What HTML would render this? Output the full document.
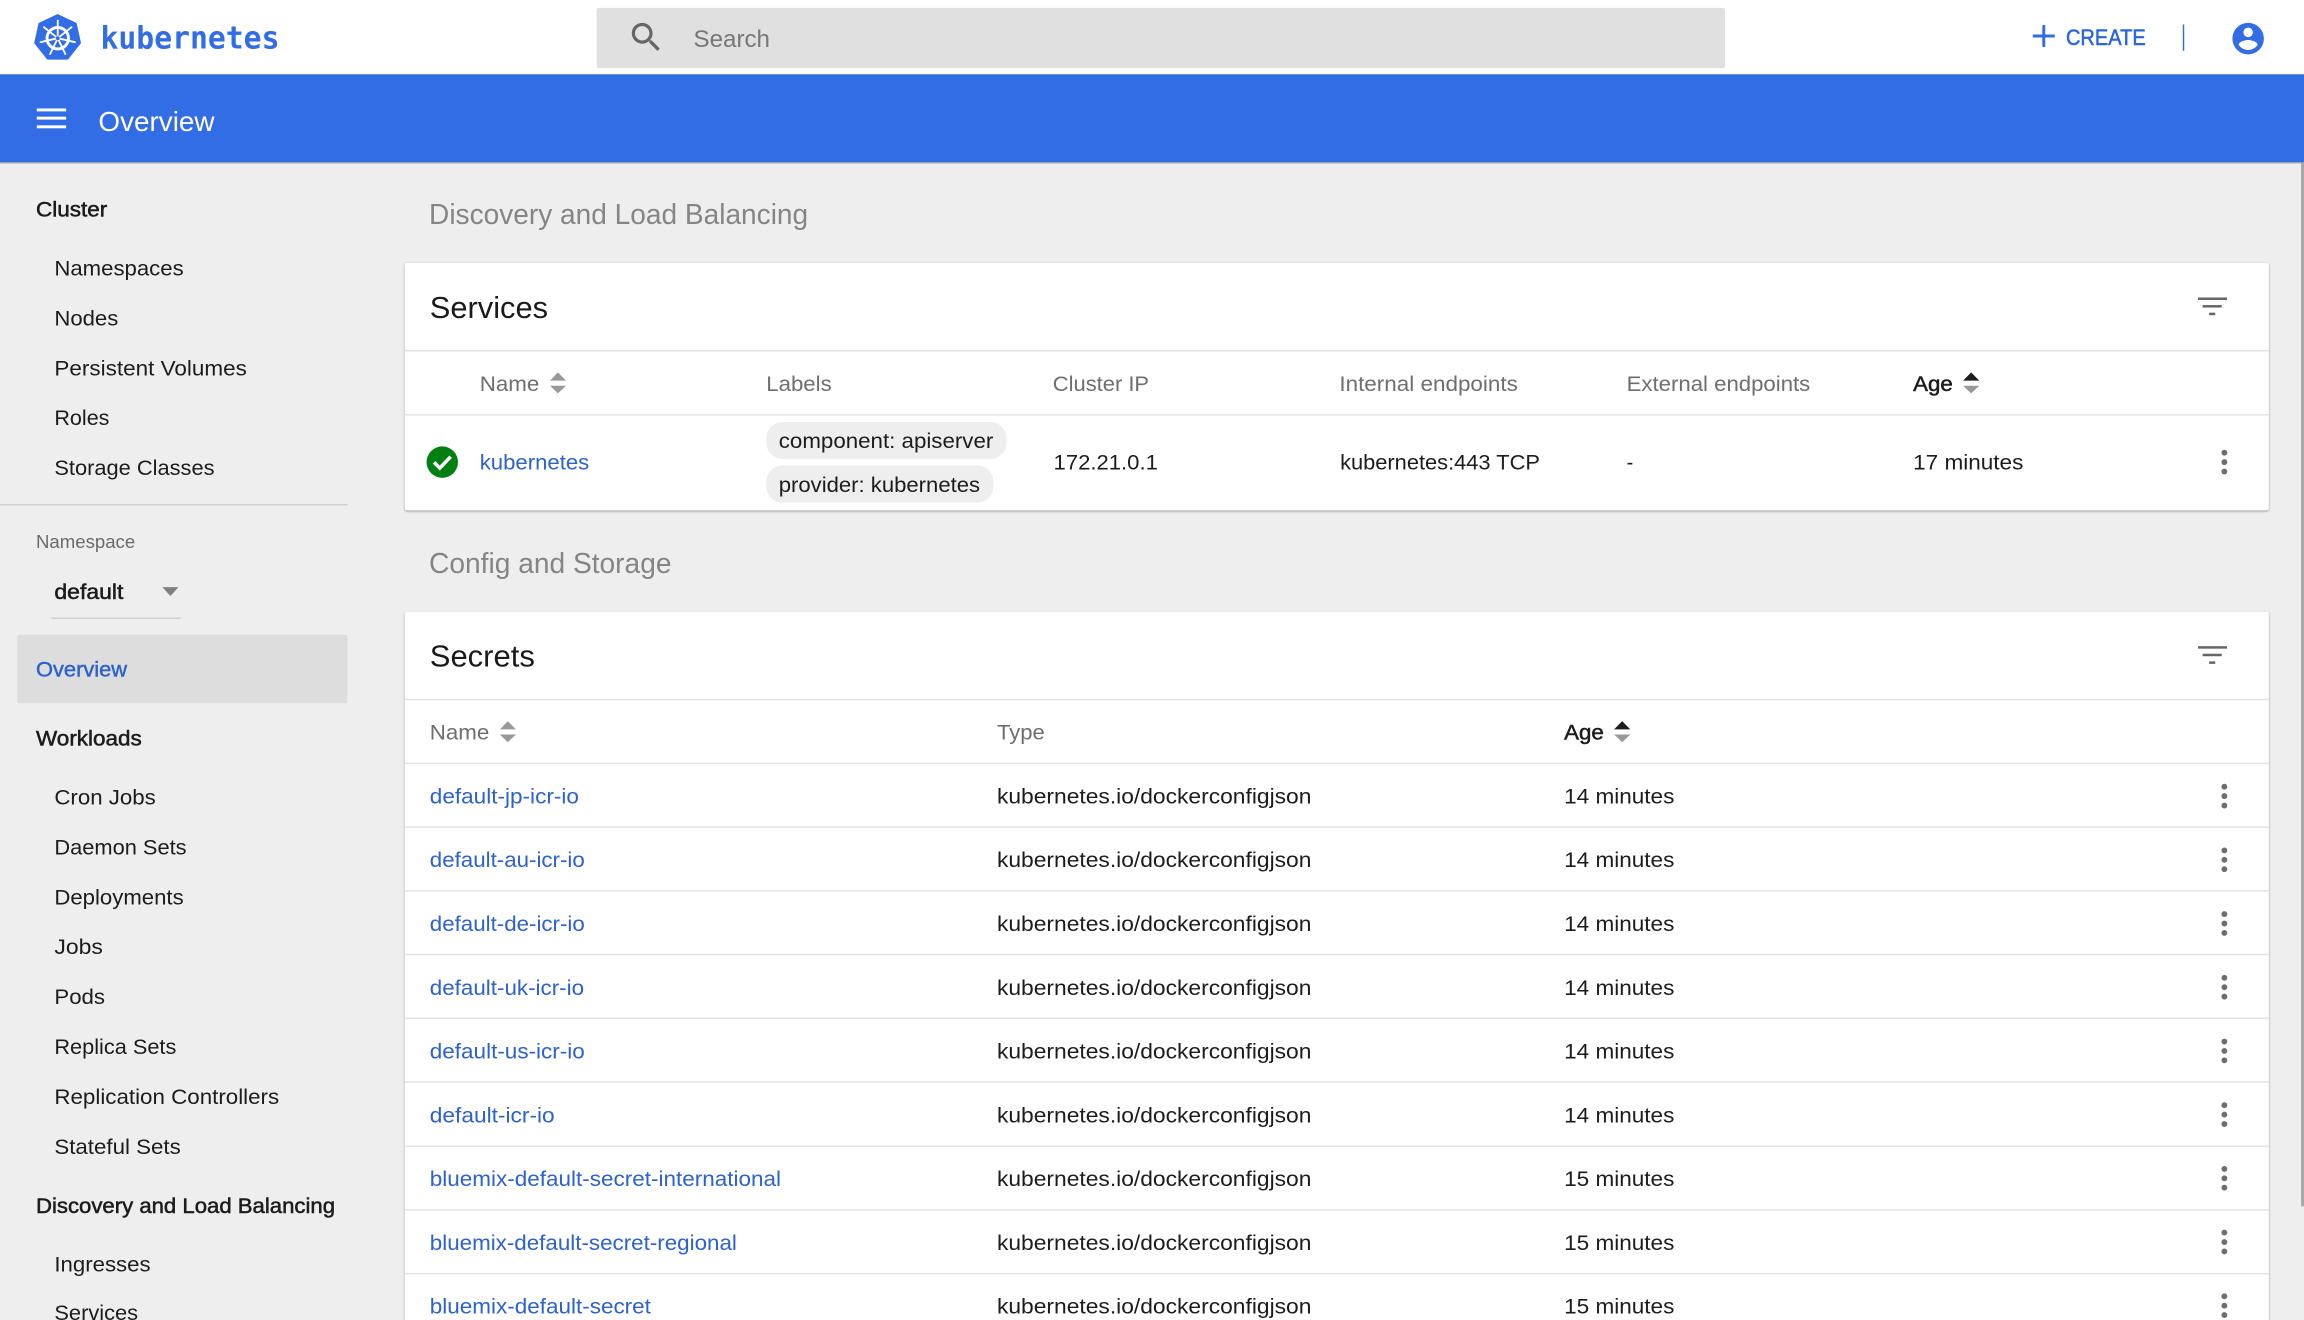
<!DOCTYPE html>
<html lang="en">
<head>
<meta charset="utf-8">
<title>Overview - Kubernetes Dashboard</title>
<style>
html,body{margin:0;padding:0;width:2304px;height:1320px;overflow:hidden;background:#eee}
svg{display:block;width:2304px;height:1320px}
text{font-family:"Liberation Sans",sans-serif;font-size:14.3px;fill:#1c1c1c}
.m{stroke:#1c1c1c;stroke-width:.35px}
.h{fill:#6e6e6e}
.l{fill:#2d62cc}
.t{font-size:19.5px;fill:#858585}
.c{font-size:20.5px;fill:#1a1a1a}
</style>
</head>
<body>
<svg xmlns="http://www.w3.org/2000/svg" viewBox="0 0 1568 898.33" preserveAspectRatio="none">
<defs>
<filter id="s" x="-2%" y="-5%" width="104%" height="110%"><feDropShadow dx="0" dy=".6" stdDeviation=".8" flood-color="#000" flood-opacity=".42"/></filter>
<linearGradient id="bs" x1="0" y1="0" x2="0" y2="1"><stop offset="0" stop-color="#000" stop-opacity=".35"/><stop offset="1" stop-color="#000" stop-opacity="0"/></linearGradient>
<g id="d" fill="#6e6e6e"><circle cx="1513.8" cy="-6.4" r="2"/><circle cx="1513.8" cy="0" r="2"/><circle cx="1513.8" cy="6.4" r="2"/></g>
<g id="f" fill="#666"><rect x="1495.9" y="-.85" width="19.7" height="1.7"/><rect x="1499" y="4.3" width="13" height="1.7"/><rect x="1503.4" y="9.5" width="4.2" height="1.7"/></g>
</defs>

<rect width="1568" height="899" fill="#eee"/>
<rect x="1566" y="110" width="2" height="711" fill="#a8a8a8"/>

<!-- top bar -->
<rect width="1568" height="51" fill="#fff"/>
<polygon points="39.2,10.3 51.5,16.1 54.4,29.2 45.9,39.9 32.5,39.9 24,29.2 26.9,16.1" fill="#326de6" stroke="#326de6" stroke-width="1.4" stroke-linejoin="round"/>
<g stroke="#fff" fill="none" stroke-linecap="round">
<circle cx="39.3" cy="26" r="7.3" stroke-width="2"/>
<g stroke-width="1.25">
<line x1="39.3" y1="26" x2="39.3" y2="14"/>
<line x1="39.3" y1="26" x2="48.7" y2="18.5"/>
<line x1="39.3" y1="26" x2="51" y2="28.7"/>
<line x1="39.3" y1="26" x2="44.5" y2="36.8"/>
<line x1="39.3" y1="26" x2="34.1" y2="36.8"/>
<line x1="39.3" y1="26" x2="27.6" y2="28.7"/>
<line x1="39.3" y1="26" x2="29.9" y2="18.5"/>
</g>
</g>
<circle cx="39.3" cy="26" r="1.3" fill="#326de6"/>
<text x="68.4" y="33" textLength="121.8" lengthAdjust="spacingAndGlyphs" style="font-family:'DejaVu Sans Mono','Liberation Mono',monospace;font-size:21px;font-weight:bold;fill:#326de6">kubernetes</text>

<rect x="406" y="5.4" width="768" height="41" rx="1.5" fill="#e0e0e0"/>
<path transform="translate(426.7 12.3) scale(1.09)" fill="#666" d="M15.5 14h-.79l-.28-.27C15.41 12.59 16 11.11 16 9.5 16 5.91 13.09 3 9.5 3S3 5.91 3 9.5 5.91 16 9.5 16c1.61 0 3.09-.59 4.23-1.57l.27.28v.79l5 4.99L20.49 19l-4.99-5zm-6 0C7.01 14 5 11.99 5 9.5S7.01 5 9.5 5 14 7.01 14 9.5 11.99 14 9.5 14z"/>
<text x="472" y="32" textLength="52" lengthAdjust="spacingAndGlyphs" style="font-size:16.5px;fill:#777">Search</text>

<path d="M1390.9 17V32M1383.4 24.5H1398.4" stroke="#326de6" stroke-width="2" fill="none"/>
<text x="1406" y="30.6" textLength="54.3" lengthAdjust="spacingAndGlyphs" style="font-size:15px;fill:#2d66dc;stroke:#2d66dc;stroke-width:.35px">CREATE</text>
<rect x="1485.5" y="16.6" width="1" height="18" fill="#326de6"/>
<path transform="translate(1517.16 13.46) scale(1.07)" fill="#326de6" d="M12 2C6.48 2 2 6.48 2 12s4.48 10 10 10 10-4.48 10-10S17.52 2 12 2zm0 3c1.66 0 3 1.34 3 3s-1.34 3-3 3-3-1.34-3-3 1.34-3 3-3zm0 14.2c-2.5 0-4.71-1.28-6-3.22.03-1.99 4-3.08 6-3.08 1.99 0 5.97 1.09 6 3.08-1.29 1.94-3.5 3.22-6 3.22z"/>

<!-- blue toolbar -->
<rect y="110.3" width="1566" height="1.6" fill="url(#bs)"/>
<rect y="51" width="1568" height="59.4" fill="#326de6"/>
<rect y="50.6" width="1568" height=".6" fill="#2759bf"/>
<g fill="#fff">
<rect x="25" y="73.8" width="20" height="2"/>
<rect x="25" y="79.4" width="20" height="2"/>
<rect x="25" y="85.3" width="20" height="2"/>
</g>
<text x="67" y="89" textLength="79" lengthAdjust="spacingAndGlyphs" style="font-size:19px;fill:#fff">Overview</text>

<!-- sidebar -->
<g transform="translate(0 .4)">
<text class="m" x="24.5" y="147" textLength="48.5" lengthAdjust="spacingAndGlyphs">Cluster</text>
<text x="37" y="187" textLength="88" lengthAdjust="spacingAndGlyphs">Namespaces</text>
<text x="37" y="221" textLength="43.5" lengthAdjust="spacingAndGlyphs">Nodes</text>
<text x="37" y="255" textLength="131" lengthAdjust="spacingAndGlyphs">Persistent Volumes</text>
<text x="37" y="289" textLength="37.5" lengthAdjust="spacingAndGlyphs">Roles</text>
<text x="37" y="323" textLength="109" lengthAdjust="spacingAndGlyphs">Storage Classes</text>
<text class="m" x="24.5" y="507" textLength="72" lengthAdjust="spacingAndGlyphs">Workloads</text>
<text x="37" y="547" textLength="69" lengthAdjust="spacingAndGlyphs">Cron Jobs</text>
<text x="37" y="581" textLength="90" lengthAdjust="spacingAndGlyphs">Daemon Sets</text>
<text x="37" y="615" textLength="88" lengthAdjust="spacingAndGlyphs">Deployments</text>
<text x="37" y="649" textLength="33" lengthAdjust="spacingAndGlyphs">Jobs</text>
<text x="37" y="683" textLength="34.5" lengthAdjust="spacingAndGlyphs">Pods</text>
<text x="37" y="717" textLength="83" lengthAdjust="spacingAndGlyphs">Replica Sets</text>
<text x="37" y="751" textLength="153" lengthAdjust="spacingAndGlyphs">Replication Controllers</text>
<text x="37" y="785" textLength="86" lengthAdjust="spacingAndGlyphs">Stateful Sets</text>
<text class="m" x="24.5" y="825" textLength="203.5" lengthAdjust="spacingAndGlyphs">Discovery and Load Balancing</text>
<text x="37" y="865" textLength="65.5" lengthAdjust="spacingAndGlyphs">Ingresses</text>
<text x="37" y="898" textLength="57" lengthAdjust="spacingAndGlyphs">Services</text>
</g>
<rect y="343" width="236.5" height="1" fill="#d2d2d2"/>
<text x="24.5" y="373" textLength="67.5" lengthAdjust="spacingAndGlyphs" style="font-size:12.4px;fill:#6a6a6a">Namespace</text>
<text class="m" x="37" y="407.8" textLength="47" lengthAdjust="spacingAndGlyphs">default</text>
<polygon points="110.5,399.6 121.5,399.6 116,405.6" fill="#808080"/>
<rect x="35" y="420.3" width="88" height=".8" fill="#c8c8c8"/>
<rect x="11.8" y="432" width="224.7" height="46.6" rx="1.5" fill="#ddd"/>
<text x="24.5" y="460.4" textLength="62" lengthAdjust="spacingAndGlyphs" style="fill:#2d62cc;stroke:#2d62cc;stroke-width:.3px">Overview</text>

<!-- headings -->
<text class="t" x="292" y="152.5" textLength="258" lengthAdjust="spacingAndGlyphs">Discovery and Load Balancing</text>
<text class="t" x="292" y="390" textLength="165" lengthAdjust="spacingAndGlyphs">Config and Storage</text>

<!-- services card -->
<rect x="275.5" y="179" width="1268.5" height="168.3" rx="1.5" fill="#fff" filter="url(#s)"/>
<text class="c" x="292.5" y="216.3" textLength="80.5" lengthAdjust="spacingAndGlyphs">Services</text>
<use href="#f" y="203.3"/>
<rect x="275.5" y="238.2" width="1268.5" height="1" fill="#e2e2e2"/>
<rect x="275.5" y="281.8" width="1268.5" height="1" fill="#e2e2e2"/>
<text class="h" x="326.5" y="266" textLength="40.5" lengthAdjust="spacingAndGlyphs">Name</text>
<polygon points="379.7,253.4 385.2,259 374.3,259" fill="#999"/>
<polygon points="374.3,262.5 385.2,262.5 379.7,267.7" fill="#999"/>
<text class="h" x="521.5" y="266" textLength="44.5" lengthAdjust="spacingAndGlyphs">Labels</text>
<text class="h" x="716.5" y="266" textLength="65.5" lengthAdjust="spacingAndGlyphs">Cluster IP</text>
<text class="h" x="911.5" y="266" textLength="121.5" lengthAdjust="spacingAndGlyphs">Internal endpoints</text>
<text class="h" x="1107" y="266" textLength="125" lengthAdjust="spacingAndGlyphs">External endpoints</text>
<text class="m" x="1302" y="266" textLength="27" lengthAdjust="spacingAndGlyphs">Age</text>
<polygon points="1341.5,253.4 1347,259 1336,259" fill="#1c1c1c"/>
<polygon points="1336,262.5 1347,262.5 1341.5,267.7" fill="#999"/>

<circle cx="301" cy="314.5" r="10.7" fill="#008010"/>
<path d="M295.4 314.7l3.9 3.9 7.4-7.8" fill="none" stroke="#fff" stroke-width="2.4"/>
<text class="l" x="326.5" y="319.5" textLength="74.5" lengthAdjust="spacingAndGlyphs">kubernetes</text>
<rect x="521.5" y="287.2" width="163.5" height="25.2" rx="11" fill="#eee"/>
<text x="530" y="305" textLength="146" lengthAdjust="spacingAndGlyphs">component: apiserver</text>
<rect x="521.5" y="316.7" width="154.5" height="25.4" rx="11" fill="#eee"/>
<text x="530" y="335" textLength="137" lengthAdjust="spacingAndGlyphs">provider: kubernetes</text>
<text x="717" y="319.5" textLength="71" lengthAdjust="spacingAndGlyphs">172.21.0.1</text>
<text x="912" y="319.5" textLength="136" lengthAdjust="spacingAndGlyphs">kubernetes:443 TCP</text>
<text x="1107" y="319.5" textLength="4.5" lengthAdjust="spacingAndGlyphs">-</text>
<text x="1302" y="319.5" textLength="75" lengthAdjust="spacingAndGlyphs">17 minutes</text>
<use href="#d" y="314.5"/>

<!-- secrets card -->
<rect x="275.5" y="416.3" width="1268.5" height="500" rx="1.5" fill="#fff" filter="url(#s)"/>
<text class="c" x="292.5" y="453.5" textLength="71.5" lengthAdjust="spacingAndGlyphs">Secrets</text>
<use href="#f" y="440.6"/>
<rect x="275.5" y="475.6" width="1268.5" height="1" fill="#e2e2e2"/>
<rect x="275.5" y="519.1" width="1268.5" height="1" fill="#e2e2e2"/>
<rect x="275.5" y="562.4" width="1268.5" height="1" fill="#e2e2e2"/>
<rect x="275.5" y="605.75" width="1268.5" height="1" fill="#e2e2e2"/>
<rect x="275.5" y="649.1" width="1268.5" height="1" fill="#e2e2e2"/>
<rect x="275.5" y="692.45" width="1268.5" height="1" fill="#e2e2e2"/>
<rect x="275.5" y="735.8" width="1268.5" height="1" fill="#e2e2e2"/>
<rect x="275.5" y="779.6" width="1268.5" height="1" fill="#e2e2e2"/>
<rect x="275.5" y="823" width="1268.5" height="1" fill="#e2e2e2"/>
<rect x="275.5" y="866.3" width="1268.5" height="1" fill="#e2e2e2"/>
<text class="h" x="292.5" y="503.4" textLength="40.5" lengthAdjust="spacingAndGlyphs">Name</text>
<polygon points="345.6,490.8 351.1,496.4 340.2,496.4" fill="#999"/>
<polygon points="340.2,499.9 351.1,499.9 345.6,505.1" fill="#999"/>
<text class="h" x="678.5" y="503.4" textLength="32.5" lengthAdjust="spacingAndGlyphs">Type</text>
<text class="m" x="1064.5" y="503.4" textLength="27" lengthAdjust="spacingAndGlyphs">Age</text>
<polygon points="1104,490.8 1109.5,496.4 1098.5,496.4" fill="#1c1c1c"/>
<polygon points="1098.5,499.9 1109.5,499.9 1104,505.1" fill="#999"/>

<text class="l" x="292.5" y="546.8" textLength="101.5" lengthAdjust="spacingAndGlyphs">default-jp-icr-io</text>
<text x="678.5" y="546.8" textLength="214" lengthAdjust="spacingAndGlyphs">kubernetes.io/dockerconfigjson</text>
<text x="1064.5" y="546.8" textLength="75" lengthAdjust="spacingAndGlyphs">14 minutes</text>
<use href="#d" y="541.8"/>

<text class="l" x="292.5" y="590.2" textLength="105.5" lengthAdjust="spacingAndGlyphs">default-au-icr-io</text>
<text x="678.5" y="590.2" textLength="214" lengthAdjust="spacingAndGlyphs">kubernetes.io/dockerconfigjson</text>
<text x="1064.5" y="590.2" textLength="75" lengthAdjust="spacingAndGlyphs">14 minutes</text>
<use href="#d" y="585.15"/>

<text class="l" x="292.5" y="633.5" textLength="105.5" lengthAdjust="spacingAndGlyphs">default-de-icr-io</text>
<text x="678.5" y="633.5" textLength="214" lengthAdjust="spacingAndGlyphs">kubernetes.io/dockerconfigjson</text>
<text x="1064.5" y="633.5" textLength="75" lengthAdjust="spacingAndGlyphs">14 minutes</text>
<use href="#d" y="628.5"/>

<text class="l" x="292.5" y="677" textLength="105" lengthAdjust="spacingAndGlyphs">default-uk-icr-io</text>
<text x="678.5" y="677" textLength="214" lengthAdjust="spacingAndGlyphs">kubernetes.io/dockerconfigjson</text>
<text x="1064.5" y="677" textLength="75" lengthAdjust="spacingAndGlyphs">14 minutes</text>
<use href="#d" y="671.85"/>

<text class="l" x="292.5" y="720.3" textLength="105.5" lengthAdjust="spacingAndGlyphs">default-us-icr-io</text>
<text x="678.5" y="720.3" textLength="214" lengthAdjust="spacingAndGlyphs">kubernetes.io/dockerconfigjson</text>
<text x="1064.5" y="720.3" textLength="75" lengthAdjust="spacingAndGlyphs">14 minutes</text>
<use href="#d" y="715.2"/>

<text class="l" x="292.5" y="763.95" textLength="85" lengthAdjust="spacingAndGlyphs">default-icr-io</text>
<text x="678.5" y="763.95" textLength="214" lengthAdjust="spacingAndGlyphs">kubernetes.io/dockerconfigjson</text>
<text x="1064.5" y="763.95" textLength="75" lengthAdjust="spacingAndGlyphs">14 minutes</text>
<use href="#d" y="758.55"/>

<text class="l" x="292.5" y="807.3" textLength="239" lengthAdjust="spacingAndGlyphs">bluemix-default-secret-international</text>
<text x="678.5" y="807.3" textLength="214" lengthAdjust="spacingAndGlyphs">kubernetes.io/dockerconfigjson</text>
<text x="1064.5" y="807.3" textLength="75" lengthAdjust="spacingAndGlyphs">15 minutes</text>
<use href="#d" y="801.9"/>

<text class="l" x="292.5" y="850.65" textLength="209" lengthAdjust="spacingAndGlyphs">bluemix-default-secret-regional</text>
<text x="678.5" y="850.65" textLength="214" lengthAdjust="spacingAndGlyphs">kubernetes.io/dockerconfigjson</text>
<text x="1064.5" y="850.65" textLength="75" lengthAdjust="spacingAndGlyphs">15 minutes</text>
<use href="#d" y="845.25"/>

<text class="l" x="292.5" y="894" textLength="150.5" lengthAdjust="spacingAndGlyphs">bluemix-default-secret</text>
<text x="678.5" y="894" textLength="214" lengthAdjust="spacingAndGlyphs">kubernetes.io/dockerconfigjson</text>
<text x="1064.5" y="894" textLength="75" lengthAdjust="spacingAndGlyphs">15 minutes</text>
<use href="#d" y="888.6"/>
</svg>
</body>
</html>
